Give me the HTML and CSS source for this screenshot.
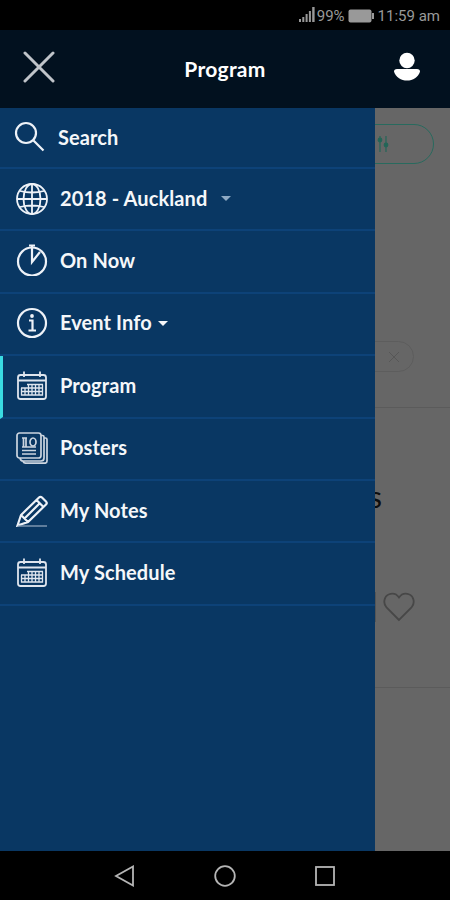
FILE: index.html
```html
<!DOCTYPE html>
<html lang="en">
<head>
  <meta charset="UTF-8" />
  <meta name="viewport" content="width=device-width, initial-scale=1.0"/>
  <title>Program</title>
  <link rel="stylesheet" href="styles.css">
</head>
<body>

  <!-- Status bar -->
  <div class="status-bar">
    <svg class="signal" width="16" height="15" viewBox="0 0 16 15"><path d="M0 12h2v3H0zM3.3 10h2v5h-2zM6.6 7h2v8h-2zM9.9 4h2v11h-2zM13.2 0h2.4v15h-2.4z"/></svg>
    <span class="percent">99%</span>
    <svg class="battery" width="27" height="14" viewBox="0 0 27 14"><rect x="0.5" y="0.5" width="23" height="13" rx="2"/><rect x="24" y="4" width="2" height="6"/></svg>
    <span class="clock">11:59 am</span>
  </div>

  <header class="header">
    <svg class="close" width="32" height="32" viewBox="0 0 32 32"><path d="M2 2l28 28M30 2L2 30"/></svg>
    <h1>Program</h1>
    <svg class="user" width="28" height="32" viewBox="0 0 28 32"><circle cx="14" cy="9.5" r="7.7"/><path d="M4 18H24Q27 18 27 20.7C25 26.500 20 29.500 14 29.500S3 26.500 1 20.700Q1 18 4 18z"/></svg>
  </header>

  <main class="screen">
    <!-- Dimmed page -->
    <div class="page">
      <section class="filters">
        <div class="filter-btn">
          <svg width="12" height="18" viewBox="0 0 12 18"><path d="M3 1v16M9 1v16"/><circle cx="3" cy="5" r="1.8"/><circle cx="9" cy="10" r="1.8"/></svg>
        </div>
        <div class="chip">
          <svg width="12" height="12" viewBox="0 0 12 12"><path d="M1 1l10 10M11 1L1 11"/></svg>
        </div>
      </section>
      <section class="card">
        <div class="card-title">s</div>
        <div class="card-actions">
          <svg width="32" height="30" viewBox="0 0 32 30"><path d="M16 28L3.500 15.500C-0.500 11 1.500 4 5.500 2.500C9.500 0.800 13.500 1.800 16 5.500C18.500 1.800 22.500 0.800 26.500 2.500C30.500 4 32.500 11 28.500 15.500Z"/></svg>
        </div>
      </section>
    </div>

    <!-- Side menu -->
    <nav class="drawer">
      <div class="item search">
        <svg class="icon" viewBox="0 0 32 32"><circle cx="12" cy="12" r="10"/><path d="M19.500 19.500l10 10"/></svg>
        <span>Search</span>
      </div>
      <div class="item">
        <svg class="icon globe" viewBox="0 0 32 32"><circle cx="16" cy="16" r="15"/><ellipse cx="16" cy="16" rx="8.500" ry="15"/><path d="M16 1v30M1 16h30M4 8q12 3 24 0M4 24q12-3 24 0"/></svg>
        <span>2018 - Auckland</span>
        <i class="caret far"></i>
      </div>
      <div class="item">
        <svg class="icon timer" viewBox="0 0 32 32"><circle cx="16" cy="17.500" r="14"/><path d="M13 1.500h6M16 2v16l8-10"/></svg>
        <span>On Now</span>
      </div>
      <div class="item">
        <svg class="icon" viewBox="0 0 32 32"><circle cx="16" cy="16" r="14"/><path d="M13 13.500h3.500v10M12.500 23.500h7.500"/><circle class="dot" cx="16" cy="9" r="1.900"/></svg>
        <span>Event Info</span>
        <i class="caret"></i>
      </div>
      <div class="item active">
        <svg class="icon calendar" viewBox="0 0 32 32"><rect x="2" y="5" width="28" height="24" rx="2.500"/><path d="M2 10.500h28M8 1.500V7M24 1.500V7"/><path class="cells" d="M11 14.500h16M5 18h22M5 21.500h22M5 25h22M5.500 18v7.500M9 18v7.500M12.500 14.500v11M16 14.500v11M19.500 14.500v11M23 14.500v11M26.500 14.500v11"/></svg>
        <span>Program</span>
      </div>
      <div class="item">
        <svg class="icon posters" viewBox="0 0 32 32"><rect x="1" y="1" width="24" height="25" rx="2.500"/><path d="M25 3.500h1.500q1.500 0 1.500 1.500V26q0 3-3 3H7q-2.500 0-3-3M28 6h1.500q1.500 0 1.500 1.500V29q0 2.200-2.200 2.200H10q-2.500 0-3-2"/><ellipse cx="17" cy="10" rx="3" ry="4"/><path d="M6 6h5M6 15h14M6 18.500h14M6 22h14M7.500 6v9M10 6v9M13 15h7"/></svg>
        <span>Posters</span>
      </div>
      <div class="item">
        <svg class="icon" viewBox="0 0 32 32"><path d="M1.500 30.500L5 20L23 2.500Q24.500 1 26 2.500L30 6.500Q31.500 8 30 9.500L12 27ZM5 20l7 7M20.500 5l7 7M8.500 23.500L24 8"/><path class="line" d="M2 31h29"/></svg>
        <span>My Notes</span>
      </div>
      <div class="item">
        <svg class="icon calendar" viewBox="0 0 32 32"><rect x="2" y="5" width="28" height="24" rx="2.500"/><path d="M2 10.500h28M8 1.500V7M24 1.500V7"/><path class="cells" d="M11 14.500h16M5 18h22M5 21.500h22M5 25h22M5.500 18v7.500M9 18v7.500M12.500 14.500v11M16 14.500v11M19.500 14.500v11M23 14.500v11M26.500 14.500v11"/></svg>
        <span>My Schedule</span>
      </div>
    </nav>
  </main>

  <!-- Android buttons -->
  <div class="nav-bar">
    <svg width="22" height="22" viewBox="0 0 22 22"><path d="M19 1.500v19L2 11z"/></svg>
    <svg width="22" height="22" viewBox="0 0 22 22"><circle cx="11" cy="11" r="9.800"/></svg>
    <svg width="22" height="22" viewBox="0 0 22 22"><rect x="2" y="2" width="18" height="18"/></svg>
  </div>

</body>
</html>
```

FILE: styles.css
```css
* {
  box-sizing: border-box;
}

body {
  margin: 0;
  width: 450px;
  height: 900px;
  display: flex;
  flex-direction: column;
  background: #000;
  font-family: Lato, sans-serif;
  overflow: hidden;
}

svg {
  display: block;
  flex: none;
  fill: none;
}

.status-bar {
  height: 30px;
  padding: 2px 10px 0 0;
  display: flex;
  align-items: center;
  justify-content: flex-end;
  color: #999;
  font-family: Roboto, sans-serif;
  font-size: 15px;
}

.signal, .battery {
  fill: #999;
}

.signal {
  margin-top: -3px;
}

.percent {
  margin: 0 3px 0 2px;
}

.clock {
  margin-left: 3px;
}

.header {
  height: 78px;
  padding: 0 29px 0 23px;
  display: flex;
  align-items: center;
  justify-content: space-between;
  background: #02111f;
}

.header h1 {
  margin: -1px 0 0 2px;
  color: #fff;
  font-size: 21px;
  font-weight: bold;
  letter-spacing: 0.3px;
}

.close {
  margin-top: -4px;
  stroke: #c0c4c9;
  stroke-width: 3;
  stroke-linecap: round;
}

.user {
  margin-top: -4px;
  fill: #fff;
}

.screen {
  height: 743px;
  position: relative;
}

.page {
  height: 100%;
  background: #666;
}

.filters {
  height: 300px;
  padding-top: 16px;
  border-bottom: 1px solid #5b5b5b;
}

.filter-btn {
  width: 90px;
  height: 40px;
  margin-left: 344px;
  padding-left: 32px;
  display: flex;
  align-items: center;
  border: 1.5px solid #286a5e;
  border-radius: 20px;
}

.filter-btn svg {
  stroke: #246658;
  stroke-width: 1.2;
}

.filter-btn circle {
  fill: #246658;
}

.chip {
  width: 74px;
  height: 31px;
  margin: 177px 0 0 340px;
  padding-right: 13px;
  display: flex;
  align-items: center;
  justify-content: flex-end;
  border: 1px solid #5d5d5d;
  border-radius: 16px;
}

.chip svg {
  stroke: #575757;
}

.card {
  height: 280px;
  padding-top: 73px;
  border-bottom: 1px solid #5b5b5b;
}

.card-title {
  margin-left: 369px;
  color: #0d0d0d;
  font-size: 30px;
  line-height: 30px;
}

.card-actions {
  width: 39px;
  height: 30px;
  margin: 81px 0 0 375px;
  padding-left: 7px;
  border-left: 1px solid #555;
}

.card-actions svg {
  stroke: #474747;
  stroke-width: 1.8;
}

.drawer {
  position: absolute;
  top: 0;
  left: 0;
  width: 375px;
  height: 100%;
  background: #093763;
}

.item {
  height: 62.4px;
  padding: 0 0 1px 16px;
  display: flex;
  align-items: center;
  border-bottom: 2px solid #0d4278;
  color: #f5f7fa;
  font-size: 20px;
  font-weight: bold;
  letter-spacing: 0.1px;
}

.item span {
  margin-top: -2px;
}

.item.search {
  height: 61px;
  padding-left: 14px;
  padding-bottom: 1px;
}

.item.search span {
  margin-top: 0;
}

.item.active {
  padding-left: 13px;
  border-left: 3px solid #3adbe2;
}

.icon {
  width: 32px;
  height: 32px;
  margin-right: 12px;
  stroke: #eef2f8;
  stroke-width: 2.2;
}

.timer {
  margin-top: -3px;
}

.globe {
  stroke-width: 1.8;
}

.calendar {
  stroke: #dfe5ee;
  stroke-width: 1.8;
}

.calendar .cells {
  stroke-width: 1.3;
}

.posters {
  stroke: #ccd5e0;
  stroke-width: 1.7;
}

.icon .line {
  stroke: #8fa5bc;
  stroke-width: 1.3;
}

.icon .dot {
  fill: #eef2f8;
  stroke: none;
}

.caret {
  margin-left: 6px;
  border: 5px solid transparent;
  border-top-color: #f5f7fa;
  border-bottom: 0;
}

.caret.far {
  margin-left: 14px;
  border-top-color: #8ea9c4;
}

.nav-bar {
  height: 49px;
  padding: 0 114px;
  display: flex;
  align-items: center;
  justify-content: space-between;
}

.nav-bar svg {
  stroke: #b5b5b5;
  stroke-width: 1.8;
}
```
